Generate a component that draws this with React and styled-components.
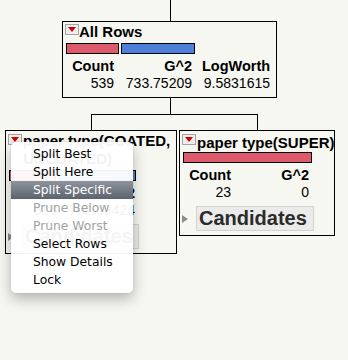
import React from 'react';
import styled, { createGlobalStyle } from 'styled-components';

const Global = createGlobalStyle`
  html, body { margin: 0; padding: 0; background: #f7f7f2; }
  body { font-family: "Liberation Sans", Arial, sans-serif; color: #000; }
`;

const Canvas = styled.div`
  position: relative;
  width: 348px;
  height: 360px;
  overflow: hidden;
  display: flex;
  flex-direction: column;
  align-items: flex-start;
`;

const Stem = styled.div`
  flex-shrink: 0;
  width: 1px;
  height: ${(p) => p.$h}px;
  margin-left: ${(p) => p.$x}px;
  background: #000;
`;

const Bracket = styled.div`
  flex-shrink: 0;
  box-sizing: border-box;
  margin-left: ${(p) => p.$x}px;
  width: ${(p) => p.$w}px;
  height: 16px;
  border: 1px solid #000;
  border-bottom: none;
`;

const Children = styled.div`
  display: flex;
  align-items: flex-start;
  gap: 2px;
  margin-left: 5px;
`;

const Node = styled.div`
  flex-shrink: 0;
  box-sizing: border-box;
  width: ${(p) => p.$w}px;
  margin-left: ${(p) => p.$x || 0}px;
  border: 1px solid #000;
  padding: ${(p) => p.$pt}px 0 ${(p) => p.$pb}px 0;
  display: flex;
  flex-direction: column;
  align-items: flex-start;
`;

const Header = styled.div`
  display: flex;
  align-items: flex-start;
  padding-left: 2px;
`;

const Toggle = styled.div`
  flex-shrink: 0;
  box-sizing: border-box;
  width: 14px;
  height: 11px;
  margin-top: ${(p) => p.$mt}px;
  border: 1px solid #a4a4a4;
  background: #eeeeec;
  display: flex;
  justify-content: center;
  padding-top: 2px;
  &::after {
    content: '';
    width: 0;
    height: 0;
    border-left: 4.5px solid transparent;
    border-right: 4.5px solid transparent;
    border-top: 5px solid #d40000;
  }
`;

const Title = styled.div`
  font-size: 15px;
  font-weight: bold;
  line-height: ${(p) => p.$lh}px;
  margin-left: ${(p) => p.$ml}px;
  white-space: ${(p) => (p.$wrap ? 'normal' : 'nowrap')};
`;

const Bars = styled.div`
  display: flex;
  gap: 2px;
  margin: ${(p) => p.$mt}px 0 0 3px;
`;

const Bar = styled.div`
  box-sizing: border-box;
  height: 11px;
  width: ${(p) => p.$w}px;
  border: 1px solid #000;
  background: ${(p) => p.$c};
`;

const Stats = styled.div`
  display: grid;
  grid-template-columns: ${(p) => p.$cols};
  column-gap: 10px;
  padding-left: 8px;
  margin-top: 4px;
`;

const Label = styled.div`
  font-size: 14.5px;
  font-weight: bold;
  line-height: 17px;
  text-align: right;
  white-space: nowrap;
`;

const Num = styled.div`
  font-size: 14px;
  line-height: 17px;
  text-align: right;
  white-space: nowrap;
`;

const CandRow = styled.div`
  display: flex;
  align-items: center;
  margin-top: 5px;
  padding-left: 2px;
`;

const Disclosure = styled.div`
  width: 0;
  height: 0;
  border-top: 4px solid transparent;
  border-bottom: 4px solid transparent;
  border-left: 6px solid #8c8c8c;
  margin-right: 8px;
`;

const CandButton = styled.div`
  box-sizing: border-box;
  width: ${(p) => p.$w}px;
  height: 25px;
  padding-left: 2px;
  background: #ebebe9;
  border: 1px solid #d2d2d0;
  font-size: 20px;
  font-weight: bold;
  line-height: 23px;
  color: #2b2b2b;
  white-space: nowrap;
`;

const Menu = styled.div`
  position: absolute;
  left: 11px;
  top: 142px;
  width: 122px;
  padding: 3px 0 4px;
  background: rgba(255, 255, 255, 0.95);
  border-radius: 5px;
  box-shadow: 0 6px 14px rgba(0, 0, 0, 0.28), 0 0 1px rgba(0, 0, 0, 0.3);
  font-family: "DejaVu Sans", "Liberation Sans", sans-serif;
`;

const MenuItem = styled.div`
  height: 18px;
  line-height: 18px;
  padding-left: 22px;
  font-size: 12.3px;
  white-space: nowrap;
  color: ${(p) => (p.$active ? '#fff' : p.$disabled ? '#a2a2a2' : '#000')};
  background: ${(p) =>
    p.$active ? 'linear-gradient(to bottom, #8d949d, #5c636d)' : 'transparent'};
`;

const menuItems = [
  { t: 'Split Best' },
  { t: 'Split Here' },
  { t: 'Split Specific', active: true },
  { t: 'Prune Below', disabled: true },
  { t: 'Prune Worst', disabled: true },
  { t: 'Select Rows' },
  { t: 'Show Details' },
  { t: 'Lock' },
];

const RED = '#dc5a6c';
const BLUE = '#4d80da';

export default function App() {
  return (
    <>
      <Global />
      <Canvas>
        <Stem $h={21} $x={170} />
        <Node $w={215} $x={62} $pt={1} $pb={5}>
          <Header>
            <Toggle $mt={1} />
            <Title $lh={17} $ml={0}>All Rows</Title>
          </Header>
          <Bars $mt={3}>
            <Bar $w={53} $c={RED} />
            <Bar $w={74} $c={BLUE} />
          </Bars>
          <Stats $cols="43px 68px 68px">
            <Label>Count</Label>
            <Label>G^2</Label>
            <Label>LogWorth</Label>
            <Num>539</Num>
            <Num>733.75209</Num>
            <Num>9.5831615</Num>
          </Stats>
        </Node>
        <Stem $h={16} $x={170} />
        <Bracket $x={91} $w={167} />
        <Children>
          <Node $w={172} $pt={1} $pb={4}>
            <Header>
              <Toggle $mt={2} />
              <Title $lh={18} $ml={1} $wrap>
                paper type(COATED, UNCOATED)
              </Title>
            </Header>
            <Bars $mt={2}>
              <Bar $w={47} $c={RED} />
              <Bar $w={78} $c={BLUE} />
            </Bars>
            <Stats $cols="43px 68px">
              <Label>Count</Label>
              <Label>G^2</Label>
              <Num>516</Num>
              <Num>702.63424</Num>
            </Stats>
            <CandRow>
              <Disclosure />
              <CandButton $w={117}>Candidates</CandButton>
            </CandRow>
          </Node>
          <Node $w={156} $pt={3} $pb={4}>
            <Header>
              <Toggle $mt={0} />
              <Title $lh={17} $ml={1}>paper type(SUPER)</Title>
            </Header>
            <Bars $mt={1}>
              <Bar $w={129} $c={RED} />
            </Bars>
            <Stats $cols="43px 68px">
              <Label>Count</Label>
              <Label>G^2</Label>
              <Num>23</Num>
              <Num>0</Num>
            </Stats>
            <CandRow>
              <Disclosure />
              <CandButton $w={118}>Candidates</CandButton>
            </CandRow>
          </Node>
        </Children>
        <Menu>
          {menuItems.map((m) => (
            <MenuItem key={m.t} $active={m.active} $disabled={m.disabled}>
              {m.t}
            </MenuItem>
          ))}
        </Menu>
      </Canvas>
    </>
  );
}
